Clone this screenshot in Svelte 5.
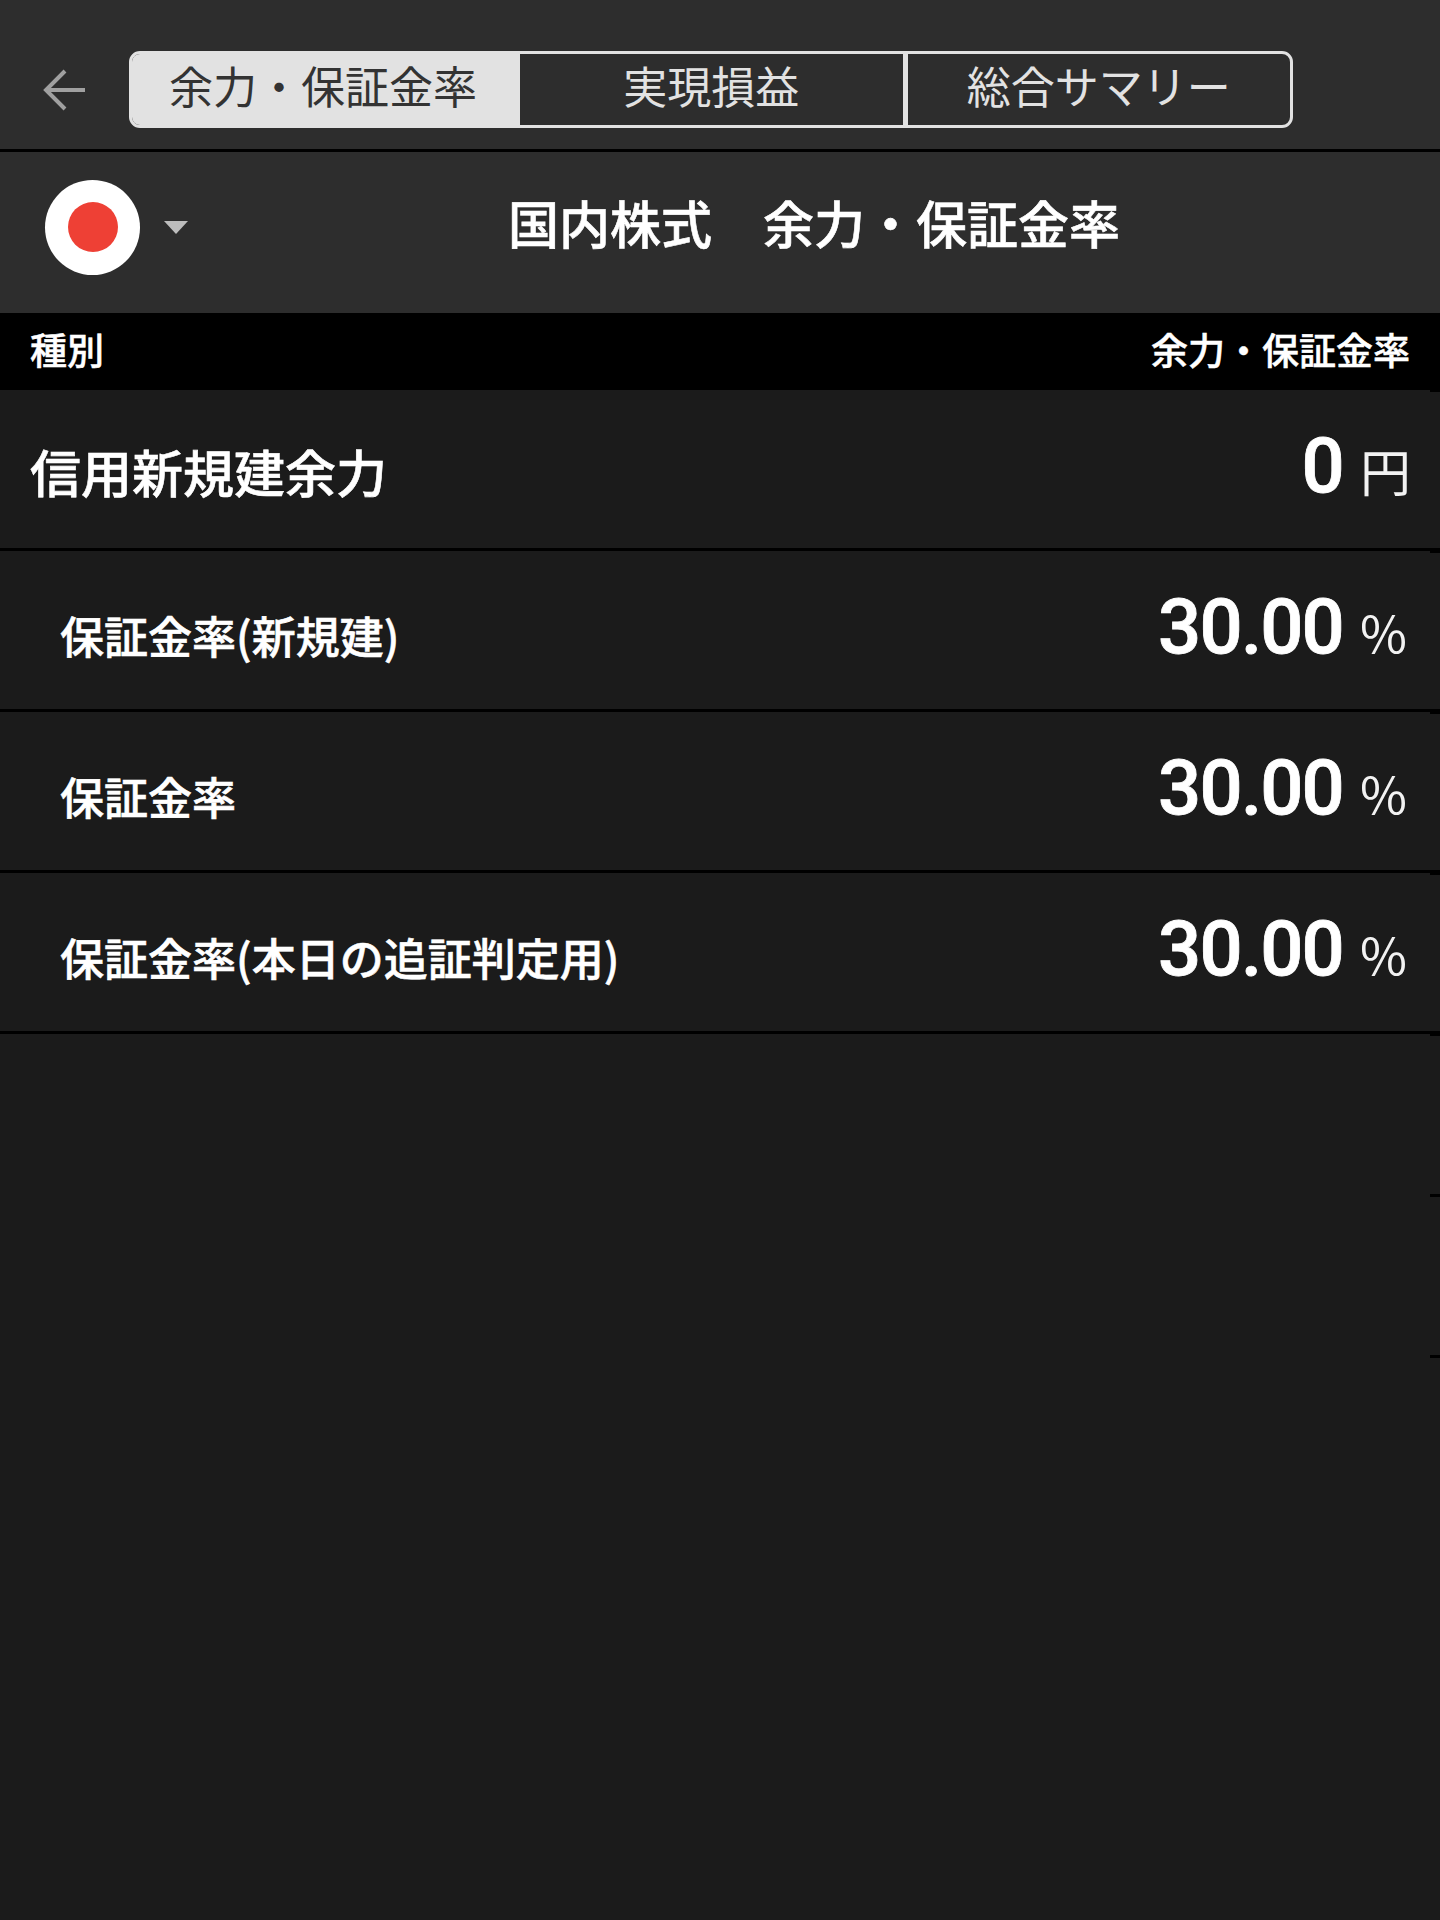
<script lang="ts">
	const tabs = ['余力・保証金率', '実現損益', '総合サマリー'];
	let active = $state(0);

	const rows = [
		{ label: '信用新規建余力', value: '0', unit: '円', main: true },
		{ label: '保証金率(新規建)', value: '30.00', unit: '%', main: false },
		{ label: '保証金率', value: '30.00', unit: '%', main: false },
		{ label: '保証金率(本日の追証判定用)', value: '30.00', unit: '%', main: false },
	];
	const stubs = [1, 2, 3, 4, 5, 6];
</script>

<div class="page">
	<header class="topbar">
		<button class="back" aria-label="戻る">
			<svg width="42" height="42" viewBox="0 0 42 42" fill="none" stroke="#a0a0a0" stroke-width="4">
				<path d="M42 21H4" />
				<path d="M22 2 3 21l19 19" />
			</svg>
		</button>
		<div class="tabs">
			{#each tabs as tab, i}
				<button class="tab" class:active={active === i} onclick={() => (active = i)}>{tab}</button>
			{/each}
		</div>
	</header>

	<section class="titlebar">
		<div class="market">
			<div class="flag"><span class="sun"></span></div>
			<span class="caret"></span>
		</div>
		<h1>国内株式　余力・保証金率</h1>
	</section>

	<div class="thead">
		<span>種別</span>
		<span>余力・保証金率</span>
	</div>

	<div class="tbody">
		<div class="rows">
			{#each rows as row}
				<div class="row">
					<span class="label" class:main={row.main}>{row.label}</span>
					<span class="amount">
						<span class="value">{row.value}</span>
						<span class="unit">{row.unit}</span>
					</span>
				</div>
			{/each}
		</div>
		<div class="strip">
			{#each stubs as s (s)}
				<div class="stub"></div>
			{/each}
		</div>
	</div>
</div>

<style>
	:global(body) {
		margin: 0;
		background: #1b1b1b;
	}

	.page {
		min-height: 1920px;
		background: #1b1b1b;
		color: #fff;
		font-family: 'Noto Sans CJK JP', 'Liberation Sans', sans-serif;
	}

	/* top bar */
	.topbar {
		height: 149px;
		box-sizing: content-box;
		background: #2d2d2d;
		border-bottom: 3px solid #000;
		display: flex;
	}

	.back {
		width: 129px;
		height: 149px;
		padding: 30px 0 0 43px;
		background: none;
		border: 0;
		display: flex;
		align-items: center;
		box-sizing: border-box;
	}

	.tabs {
		display: flex;
		width: 1164px;
		height: 77px;
		margin-top: 51px;
		box-sizing: border-box;
		border: 3px solid #e2e2e2;
		border-radius: 11px;
		overflow: hidden;
	}

	.tab {
		flex: 1 1 0;
		padding: 0 0 10px;
		background: none;
		border: 0;
		color: #e2e2e2;
		font: 400 44px/1 'Noto Sans CJK JP', sans-serif;
	}

	.tab + .tab {
		border-left: 5px solid #e2e2e2;
	}

	.tab.active + .tab {
		border-left: 0;
	}

	.tab.active {
		flex: 0 0 388px;
		background: #e2e2e2;
		color: #333;
		padding-right: 6px;
	}

	/* title */
	.titlebar {
		height: 161px;
		box-sizing: border-box;
		padding-bottom: 11px;
		background: #2d2d2d;
		display: flex;
		align-items: center;
	}

	.market {
		width: 188px;
		padding-left: 45px;
		box-sizing: border-box;
		display: flex;
		align-items: center;
		gap: 24px;
		flex-shrink: 0;
	}

	.flag {
		width: 95px;
		height: 95px;
		border-radius: 50%;
		background: #fff;
		display: flex;
		align-items: center;
		justify-content: center;
		flex-shrink: 0;
	}

	.sun {
		width: 50px;
		height: 50px;
		border-radius: 50%;
		background: #ee4035;
	}

	.caret {
		width: 0;
		height: 0;
		border-left: 12px solid transparent;
		border-right: 12px solid transparent;
		border-top: 13px solid #bdbdbd;
	}

	h1 {
		flex: 1;
		margin: 0 0 10px;
		text-align: center;
		font-size: 51px;
		font-weight: 500;
		-webkit-text-stroke: 0.6px #fff;
		line-height: 1;
	}

	/* table */
	.thead {
		height: 77px;
		box-sizing: border-box;
		padding: 0 30px 6px;
		background: #000;
		display: flex;
		justify-content: space-between;
		align-items: center;
		font-size: 37px;
		font-weight: 500;
		-webkit-text-stroke: 0.5px #fff;
	}

	.tbody {
		display: flex;
		align-items: flex-start;
	}

	.rows {
		flex: 1;
	}

	.row {
		height: 161px;
		box-sizing: border-box;
		border-bottom: 3px solid #000;
		display: flex;
		justify-content: space-between;
		align-items: center;
		padding: 0 29px 0 60px;
		width: 1440px;
		margin-right: -10px;
	}

	.label {
		margin-top: 10px;
		font-size: 44px;
		font-weight: 500;
		-webkit-text-stroke: 0.6px #fff;
		line-height: 1;
	}

	.label.main {
		margin: 5px 0 0 -30px;
		font-size: 51px;
	}

	.amount {
		display: flex;
		align-items: baseline;
		gap: 17px;
		margin-bottom: 6px;
	}

	.value {
		font: 500 76px/1 Roboto, sans-serif;
		letter-spacing: -1.8px;
		-webkit-text-stroke: 0.8px #fff;
	}

	.unit {
		width: 51px;
		font: 400 51px/1 'Noto Sans CJK JP', sans-serif;
		color: #f2f2f2;
	}

	.strip {
		width: 10px;
		flex-shrink: 0;
		border-top: 2px solid #000;
	}

	.stub {
		height: 161px;
		box-sizing: border-box;
		border-bottom: 3px solid #000;
	}
</style>
